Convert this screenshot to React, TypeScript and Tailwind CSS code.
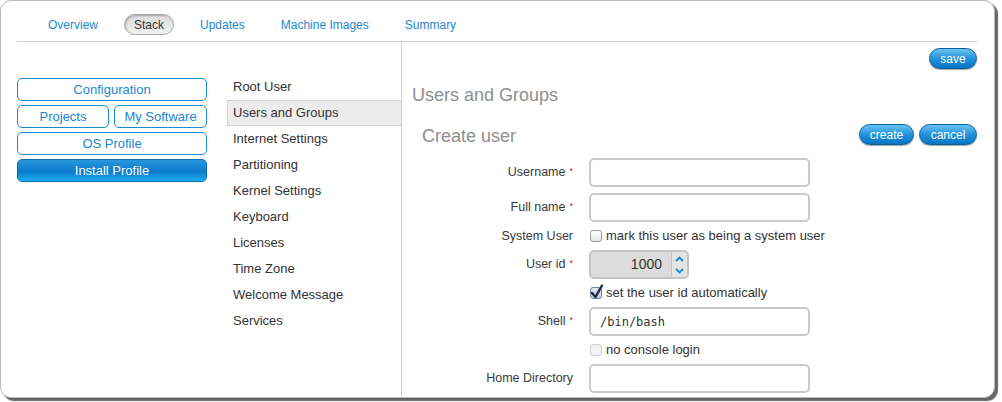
import React from 'react';

const tabs = ['Overview', 'Stack', 'Updates', 'Machine Images', 'Summary'];

const sections = [
  'Root User',
  'Users and Groups',
  'Internet Settings',
  'Partitioning',
  'Kernel Settings',
  'Keyboard',
  'Licenses',
  'Time Zone',
  'Welcome Message',
  'Services',
];

function BlueButton({ label, width }: { label: string; width: string }) {
  return (
    <button
      className={`${width} h-[21px] rounded-full border border-[#0b5f9c] bg-[linear-gradient(#6ac2f2,#1c8fd9_55%,#0b74c2)] text-[12px] leading-none text-white shadow-[0_1px_1px_rgba(0,0,0,0.35)]`}
    >
      {label}
    </button>
  );
}

function NavButton({ label, className = '' }: { label: string; className?: string }) {
  return (
    <button
      className={`h-[23px] rounded-[5px] border border-[#1a8ad4] bg-white text-[13px] leading-none text-[#1a86cf] ${className}`}
    >
      {label}
    </button>
  );
}

function Label({ text, required }: { text: string; required?: boolean }) {
  return (
    <div className="w-[162px] shrink-0 pr-[1px] text-right text-[12.5px] text-[#3a3a3a]">
      {text}
      {required && <span className="ml-[4px] align-[2px] text-[9px] text-[#cc1111]">*</span>}
    </div>
  );
}

function TextInput({ value, mono }: { value?: string; mono?: boolean }) {
  return (
    <div
      className={`ml-[15px] flex h-[29px] w-[221px] items-center rounded-[5px] border-2 border-[#cacaca] bg-white px-[9px] text-[#333] ${
        mono ? "font-['DejaVu_Sans_Mono',monospace] text-[12px]" : 'text-[13px]'
      }`}
    >
      {value}
    </div>
  );
}

function Checkbox({ checked, disabled }: { checked?: boolean; disabled?: boolean }) {
  return (
    <span
      className={`relative inline-block h-[12px] w-[12px] rounded-[3px] border ${
        disabled
          ? 'border-[#cfcfcf] bg-[#f4f4f4]'
          : checked
            ? 'border-[#6d87a8] bg-[linear-gradient(#dfe9f6,#b8cbe4)]'
            : 'border-[#9a9a9a] bg-[linear-gradient(#ffffff,#e6e6e6)]'
      }`}
    >
      {checked && (
        <svg className="absolute -left-[1px] -top-[4px]" width="14" height="16" viewBox="0 0 14 16">
          <path d="M2 9 L5.5 13 L12 1.5" fill="none" stroke="#1d2a3a" strokeWidth="2.4" strokeLinecap="round" strokeLinejoin="round" />
        </svg>
      )}
    </span>
  );
}

export default function App() {
  return (
    <div className="h-[402px] w-[1002px] bg-white font-['Liberation_Sans',Arial,sans-serif]">
      <div className="h-[398px] w-[995px] overflow-hidden rounded-[11px] border border-[#b9b9b9] bg-white pl-[16px] pr-[17px] shadow-[3px_3px_1px_rgba(0,0,0,0.6)]">
        <div className="flex h-[41px] items-center border-b border-[#cfcfcf] pl-[21px] pt-[7px]">
          {tabs.map((tab) =>
            tab === 'Stack' ? (
              <span
                key={tab}
                className="mr-[16px] flex h-[21px] items-center rounded-full border border-[#a9a9a9] bg-[linear-gradient(#dcdcdc,#f2f2f2)] px-[9px] text-[12px] text-[#333] shadow-[inset_1px_1px_2px_rgba(0,0,0,0.25)]"
              >
                {tab}
              </span>
            ) : (
              <span key={tab} className="mr-[16px] px-[10px] text-[12px] text-[#1e88d0]">
                {tab}
              </span>
            )
          )}
        </div>

        <div className="flex h-[356px]">
          <div className="flex w-[384px] shrink-0">
            <div className="mt-[36px] flex w-[190px] flex-col gap-[4px]">
              <NavButton label="Configuration" />
              <div className="flex gap-[5px]">
                <NavButton label="Projects" className="w-[92px]" />
                <NavButton label="My Software" className="flex-1" />
              </div>
              <NavButton label="OS Profile" />
              <button className="h-[23px] rounded-[5px] border border-[#0a6fb5] bg-[linear-gradient(#2a97dc,#0a7acb_55%,#19aef3)] text-[13px] leading-none text-white">
                Install Profile
              </button>
            </div>
            <div className="ml-[20px] mt-[32px] flex flex-1 flex-col">
              {sections.map((s) =>
                s === 'Users and Groups' ? (
                  <div
                    key={s}
                    className="flex h-[26px] items-center border-y border-l border-[#d2d2d2] bg-[#ececec] pl-[5px] text-[13px] text-[#333]"
                  >
                    {s}
                  </div>
                ) : (
                  <div key={s} className="flex h-[26px] items-center pl-[6px] text-[13px] text-[#333]">
                    {s}
                  </div>
                )
              )}
            </div>
          </div>

          <div className="flex-1 border-l border-[#cfcfcf] pl-[10px]">
            <div className="flex justify-end pt-[6px]">
              <BlueButton label="save" width="w-[48px]" />
            </div>
            <h2 className="mt-[15px] text-[18px] leading-[22px] text-[#8e8e8e]">Users and Groups</h2>
            <div className="mt-[18px] flex h-[21px] items-start justify-between pl-[10px]">
              <span className="mt-[2px] text-[18px] leading-[21px] text-[#8e8e8e]">Create user</span>
              <div className="flex gap-[5px]">
                <BlueButton label="create" width="w-[55px]" />
                <BlueButton label="cancel" width="w-[58px]" />
              </div>
            </div>

            <div className="mt-[13px] flex flex-col gap-[6px]">
              <div className="flex h-[29px] items-center">
                <Label text="Username" required />
                <TextInput />
              </div>
              <div className="flex h-[29px] items-center">
                <Label text="Full name" required />
                <TextInput />
              </div>
              <div className="flex h-[16px] items-center">
                <Label text="System User" />
                <div className="ml-[16px] flex items-center gap-[4px] text-[13px] text-[#333]">
                  <Checkbox />
                  <span>mark this user as being a system user</span>
                </div>
              </div>
              <div className="flex h-[29px] items-center">
                <Label text="User id" required />
                <div className="ml-[15px] flex h-[29px] w-[100px] overflow-hidden rounded-[5px] border-2 border-[#c4c4c4] bg-[#dcdcdc]">
                  <div className="flex flex-1 items-center justify-end pr-[9px] text-[14px] text-[#333]">1000</div>
                  <div className="flex w-[16px] flex-col items-center justify-center border-l border-[#c4c4c4] bg-[#e4e4e4]">
                    <svg width="9" height="6" viewBox="0 0 9 6">
                      <path d="M1 5 L4.5 1.5 L8 5" fill="none" stroke="#1a86d0" strokeWidth="1.8" />
                    </svg>
                    <svg className="mt-[6px]" width="9" height="6" viewBox="0 0 9 6">
                      <path d="M1 1 L4.5 4.5 L8 1" fill="none" stroke="#1a86d0" strokeWidth="1.8" />
                    </svg>
                  </div>
                </div>
              </div>
              <div className="flex h-[16px] items-center">
                <Label text="" />
                <div className="ml-[16px] flex items-center gap-[4px] text-[13px] text-[#333]">
                  <Checkbox checked />
                  <span>set the user id automatically</span>
                </div>
              </div>
              <div className="flex h-[29px] items-center">
                <Label text="Shell" required />
                <TextInput value="/bin/bash" mono />
              </div>
              <div className="flex h-[16px] items-center">
                <Label text="" />
                <div className="ml-[16px] flex items-center gap-[4px] text-[13px] text-[#333]">
                  <Checkbox disabled />
                  <span>no console login</span>
                </div>
              </div>
              <div className="flex h-[29px] items-center">
                <Label text="Home Directory" />
                <TextInput />
              </div>
            </div>
          </div>
        </div>
      </div>
    </div>
  );
}
